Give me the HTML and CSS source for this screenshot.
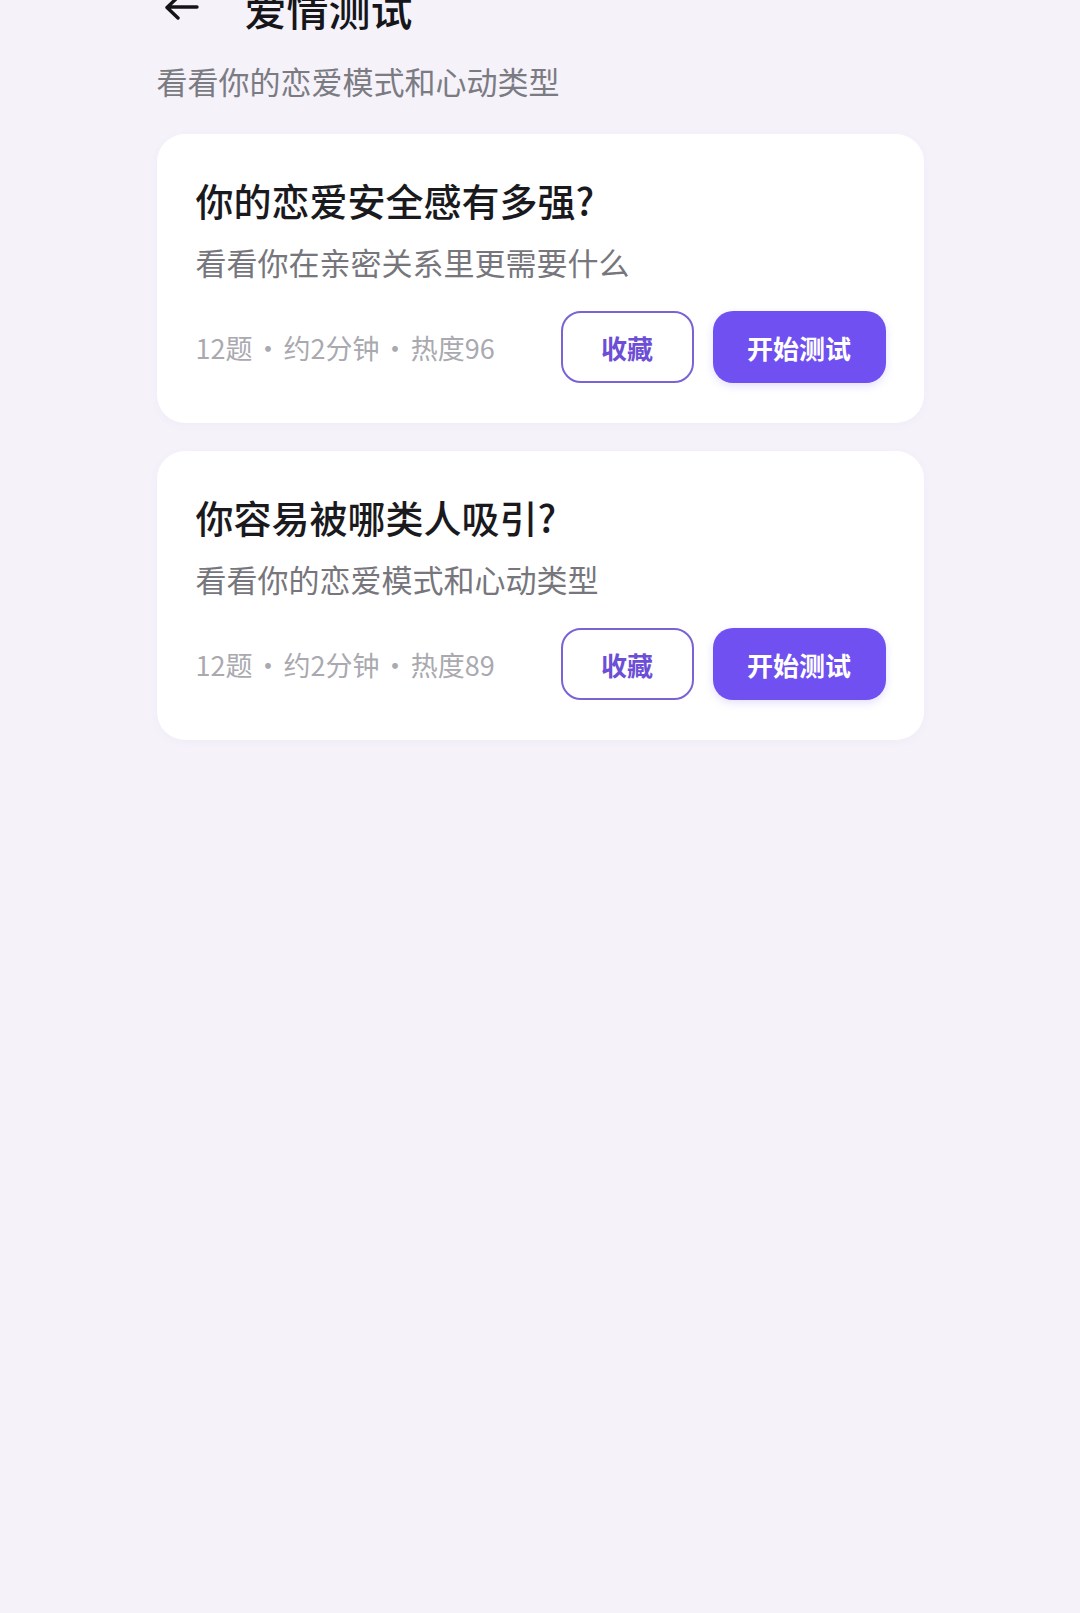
FILE: index.html
```html
<!DOCTYPE html>
<html lang="zh-CN">
<head>
    <meta charset="UTF-8">
    <meta name="viewport" content="width=device-width, initial-scale=1.0">
    <title>爱情测试</title>
    <link rel="stylesheet" href="styles.css">
</head>
<body>

    <div class="page">
        <div class="header">
            <button class="back" aria-label="返回">
                <svg width="36" height="26" viewBox="0 0 36 26">
                    <path d="M34 12H5M15 2L4 12.5L15 23" fill="none" stroke="#141418" stroke-width="3.4" stroke-linecap="round" stroke-linejoin="round"/>
                </svg>
            </button>
            <h1>爱情测试</h1>
        </div>
        <p class="subtitle">看看你的恋爱模式和心动类型</p>

        <div class="card">
            <h2>你的恋爱安全感有多强?</h2>
            <p class="desc">看看你在亲密关系里更需要什么</p>
            <div class="card-footer">
                <span class="meta">12题 · 约2分钟 · 热度96</span>
                <div class="actions">
                    <button class="btn btn-outline">收藏</button>
                    <button class="btn btn-primary">开始测试</button>
                </div>
            </div>
        </div>

        <div class="card">
            <h2>你容易被哪类人吸引?</h2>
            <p class="desc">看看你的恋爱模式和心动类型</p>
            <div class="card-footer">
                <span class="meta">12题 · 约2分钟 · 热度89</span>
                <div class="actions">
                    <button class="btn btn-outline">收藏</button>
                    <button class="btn btn-primary">开始测试</button>
                </div>
            </div>
        </div>
    </div>

</body>
</html>
```

FILE: styles.css
```css
body {
    font-family: "Noto Sans CJK SC", "Noto Sans", sans-serif;
    background-color: #f5f2fa;
    margin: 0;
    color: #16161a;
}
.page {
    width: 767px;
    margin: 0 auto;
}
.header {
    display: flex;
    align-items: center;
    height: 48px;
    margin-top: -16px;
}
.back {
    background: none;
    border: none;
    padding: 0;
    margin-left: 6px;
    width: 36px;
    height: 26px;
    margin-top: 0;
    cursor: pointer;
}
.back svg {
    display: block;
}
.header h1 {
    margin: 0 0 0 46px;
    font-size: 42px;
    font-weight: 500;
    line-height: 48px;
}
.subtitle {
    margin: 28px 0 32px;
    font-size: 31px;
    line-height: 42px;
    color: #7b7b82;
}
.card {
    background: #fff;
    border-radius: 28px;
    padding: 42px 38px 40px 39px;
    margin-bottom: 28px;
    box-shadow: 0 2px 10px rgba(120, 100, 180, 0.04);
}
.card h2 {
    margin: 0;
    font-size: 38px;
    font-weight: 500;
    line-height: 48px;
    color: #1a1a1e;
}
.card .desc {
    margin: 16px 0 28px;
    font-size: 31px;
    line-height: 43px;
    color: #76767c;
}
.card-footer {
    display: flex;
    align-items: center;
    justify-content: space-between;
}
.meta {
    font-size: 27px;
    color: #a9a9af;
    word-spacing: -4px;
}
.actions {
    display: flex;
    gap: 19px;
}
.btn {
    height: 72px;
    border-radius: 20px;
    font-family: inherit;
    font-size: 26px;
    font-weight: 700;
    cursor: pointer;
}
.btn-outline {
    width: 133px;
    background: #fff;
    border: 2px solid #7a63d4;
    color: #6c4fd6;
}
.btn-primary {
    width: 173px;
    background: #7050f0;
    border: none;
    color: #fff;
    box-shadow: 0 3px 8px rgba(112, 80, 240, 0.18);
}
```
